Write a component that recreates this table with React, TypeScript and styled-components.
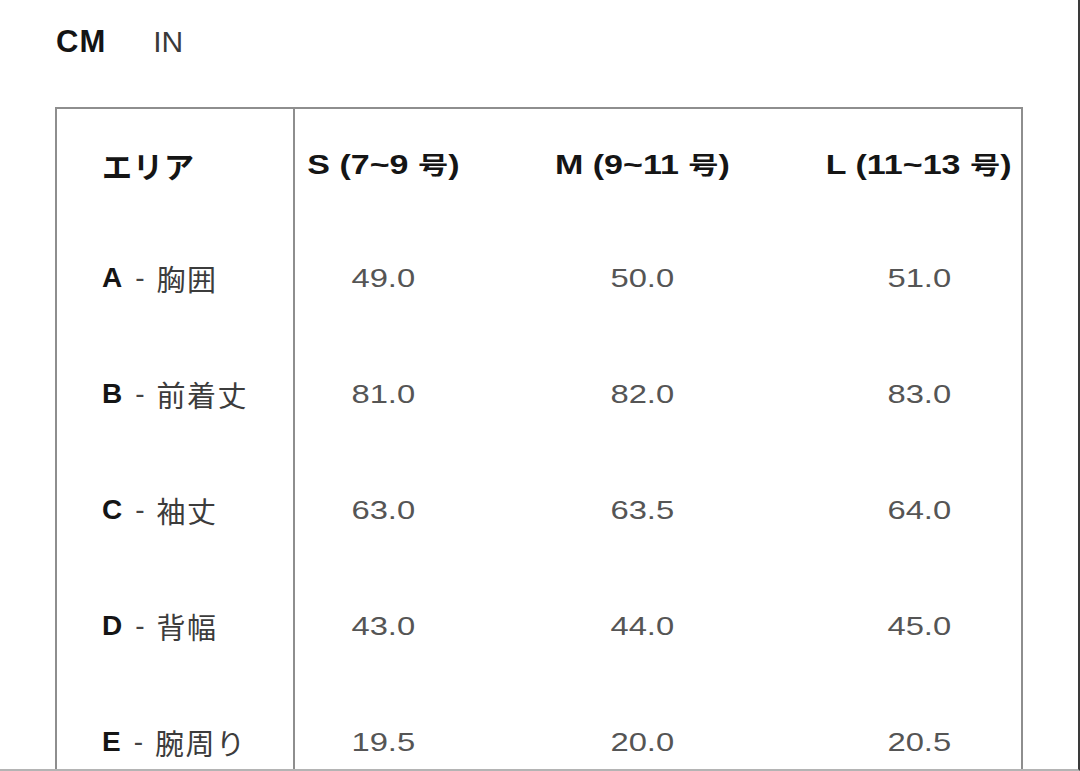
import React from "react";
import styled, { createGlobalStyle } from "styled-components";

const GlobalStyle = createGlobalStyle`
  html, body {
    margin: 0;
    padding: 0;
    background: #ffffff;
  }
  body {
    font-family: "Liberation Sans", Arial, "Noto Sans CJK JP", sans-serif;
    -webkit-font-smoothing: antialiased;
  }
`;

const Frame = styled.div`
  width: 1080px;
  height: 771px;
  box-sizing: border-box;
  overflow: hidden;
  border-right: 2px solid #3a3a3a;
  border-bottom: 2px solid #b4b4b4;
  background: #fff;
`;

const UnitTabs = styled.div`
  display: flex;
  align-items: baseline;
  gap: 47px;
  padding: 22px 0 0 56px;
  height: 85px;
  box-sizing: border-box;
`;

const UnitTab = styled.span<{ $active?: boolean }>`
  font-family: "Liberation Sans", Arial, sans-serif;
  font-size: ${(p) => (p.$active ? "31px" : "30px")};
  line-height: 40px;
  font-weight: ${(p) => (p.$active ? 700 : 400)};
  letter-spacing: ${(p) => (p.$active ? "1px" : "0")};
  color: ${(p) => (p.$active ? "#141414" : "#3a3a3a")};
`;

const TableBox = styled.div`
  margin: 22px 0 0 55px;
  width: 968px;
  height: 700px;
  box-sizing: border-box;
  border: 2px solid #8e8e8e;
  border-bottom: none;
`;

const Grid = styled.div`
  display: grid;
  grid-template-columns: 238px 177px 340px 214px;
  grid-template-rows: 111px;
  grid-auto-rows: 116px;
  width: 969px;
`;

const Cell = styled.div<{ $label?: boolean }>`
  display: flex;
  align-items: center;
  justify-content: ${(p) => (p.$label ? "flex-start" : "center")};
  box-sizing: border-box;
  padding-left: ${(p) => (p.$label ? "45px" : "0")};
  border-right: ${(p) => (p.$label ? "2px solid #8e8e8e" : "none")};
  white-space: nowrap;
  font-size: 26px;
  line-height: 32px;
`;

const Stretched = styled.span`
  display: inline-block;
  transform: scaleX(1.26);
  transform-origin: center;
`;

const HeadText = styled(Stretched)`
  font-weight: 700;
  color: #151515;
  font-size: 27px;
`;

const HeadCjk = styled.span`
  font-family: "Noto Sans CJK JP", sans-serif;
  font-weight: 700;
  font-size: 24px;
`;

const AreaTitle = styled.span`
  font-family: "Noto Sans CJK JP", sans-serif;
  font-weight: 700;
  font-size: 30px;
  letter-spacing: 1px;
  color: #151515;
`;

const Letter = styled.span`
  font-weight: 700;
  font-size: 28px;
  color: #151515;
  margin-right: 13px;
`;

const Dash = styled.span`
  color: #444;
  font-size: 28px;
  margin-right: 12px;
`;

const AreaName = styled.span`
  font-family: "Noto Sans CJK JP", sans-serif;
  color: #3c3c3c;
  font-size: 29px;
  letter-spacing: 1.5px;
`;

const Value = styled(Stretched)`
  color: #555;
  font-family: "Liberation Sans", Arial, sans-serif;
  font-size: 26px;
`;

const sizes = [
  { code: "S", range: "7~9" },
  { code: "M", range: "9~11" },
  { code: "L", range: "11~13" },
];

const rows = [
  { letter: "A", name: "胸囲", values: ["49.0", "50.0", "51.0"] },
  { letter: "B", name: "前着丈", values: ["81.0", "82.0", "83.0"] },
  { letter: "C", name: "袖丈", values: ["63.0", "63.5", "64.0"] },
  { letter: "D", name: "背幅", values: ["43.0", "44.0", "45.0"] },
  { letter: "E", name: "腕周り", values: ["19.5", "20.0", "20.5"] },
];

export default function App() {
  return (
    <>
      <GlobalStyle />
      <Frame>
        <UnitTabs>
          <UnitTab $active>CM</UnitTab>
          <UnitTab>IN</UnitTab>
        </UnitTabs>
        <TableBox>
          <Grid>
            <Cell $label>
              <AreaTitle>エリア</AreaTitle>
            </Cell>
            {sizes.map((s) => (
              <Cell key={s.code}>
                <HeadText>
                  {s.code} ({s.range} <HeadCjk>号</HeadCjk>)
                </HeadText>
              </Cell>
            ))}
            {rows.map((r) => (
              <React.Fragment key={r.letter}>
                <Cell $label>
                  <Letter>{r.letter}</Letter>
                  <Dash>-</Dash>
                  <AreaName>{r.name}</AreaName>
                </Cell>
                {r.values.map((v, i) => (
                  <Cell key={i}>
                    <Value>{v}</Value>
                  </Cell>
                ))}
              </React.Fragment>
            ))}
          </Grid>
        </TableBox>
      </Frame>
    </>
  );
}
